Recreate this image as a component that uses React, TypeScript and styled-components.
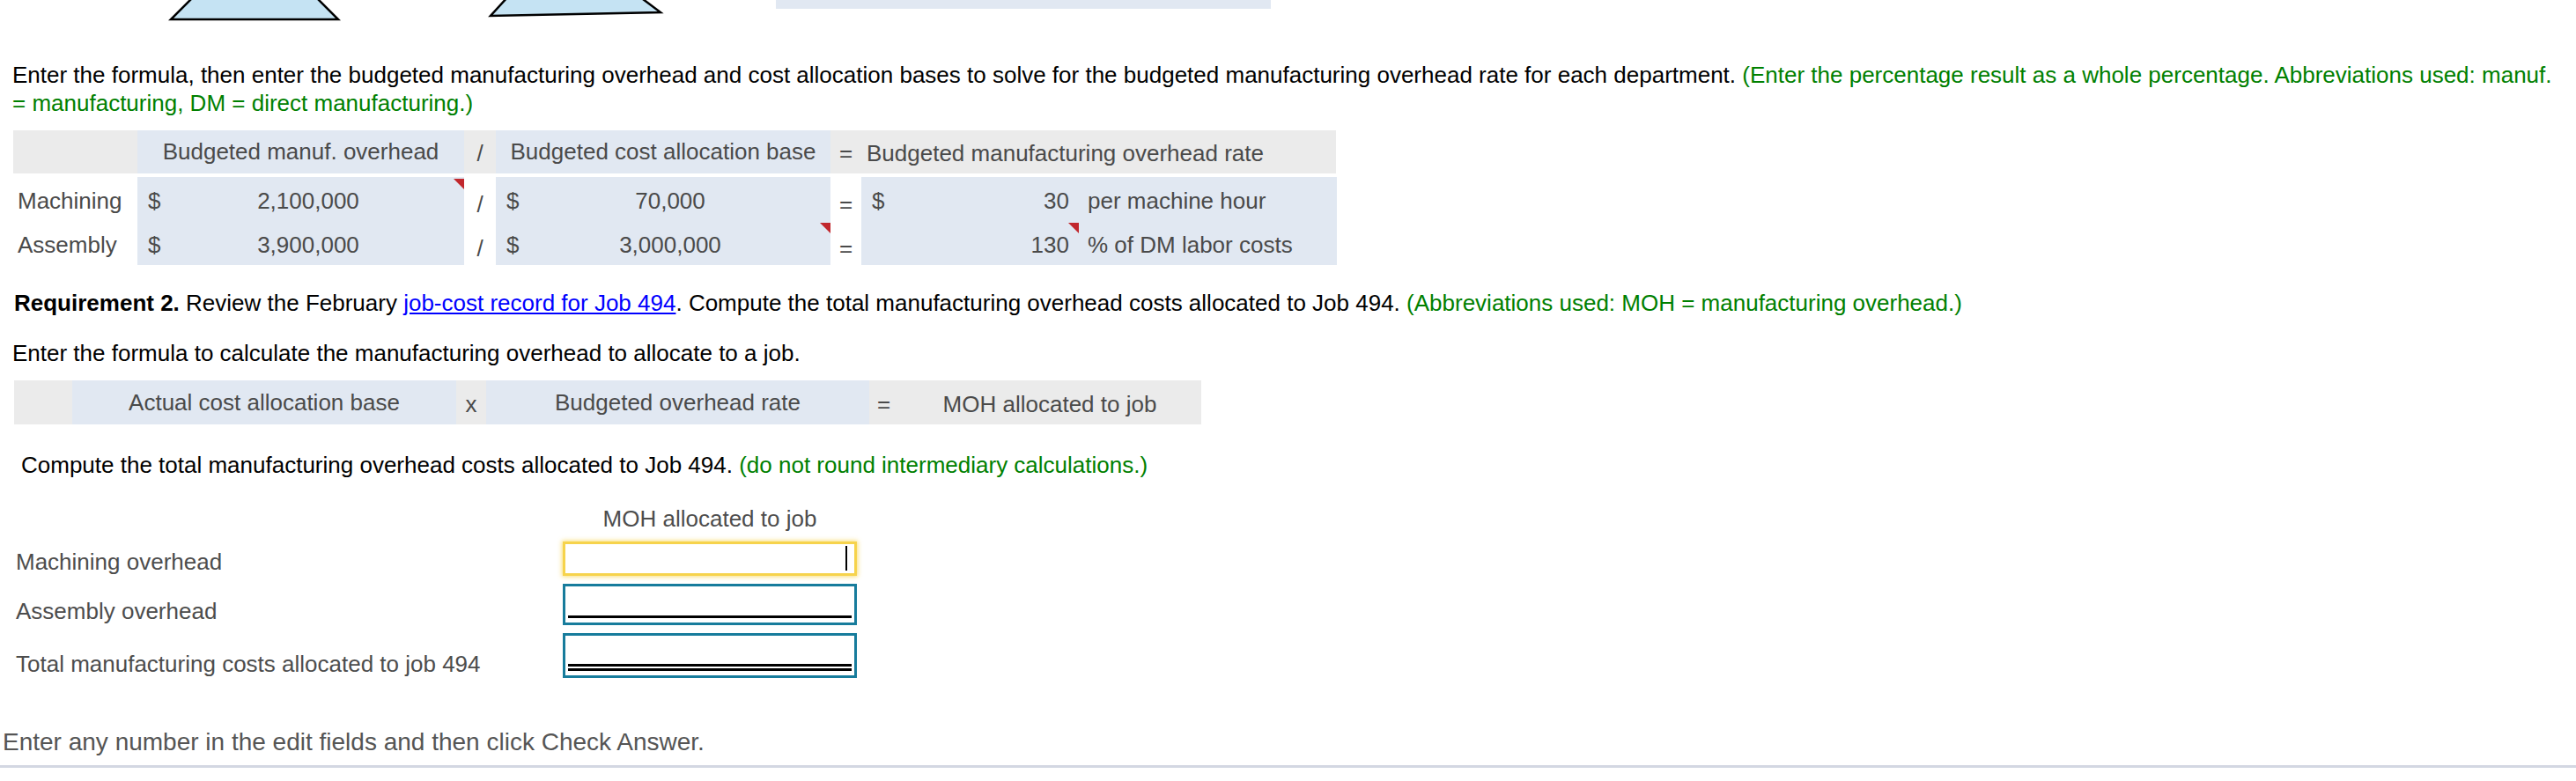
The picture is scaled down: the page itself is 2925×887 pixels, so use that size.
import React from 'react'
import styled, { createGlobalStyle } from 'styled-components'

const GlobalStyle = createGlobalStyle`
  html, body {
    margin: 0;
    padding: 0;
    background: #fff;
  }
  body {
    font-family: "Liberation Sans", Arial, sans-serif;
    font-size: 26px;
    color: #000;
    overflow: hidden;
  }
`

const Page = styled.div`
  width: 2925px;
  height: 887px;
  display: flex;
  flex-direction: column;
`

const TopStrip = styled.div`
  height: 30px;
  display: flex;
  align-items: flex-start;
`

const FadedPanel = styled.div`
  margin-left: 121px;
  width: 562px;
  height: 10px;
  background: #e1e8f2;
`

const Para = styled.p<{ $top: number; $left?: number; $muted?: boolean }>`
  margin: ${(p) => p.$top}px 16px 0 ${(p) => p.$left ?? 14}px;
  line-height: 32px;
  color: ${(p) => (p.$muted ? '#555' : '#000')};
`

const Hint = styled.span`
  color: #008000;
`

const Link = styled.a`
  color: #0000ff;
  text-decoration: underline;
  cursor: pointer;
`

/* ---------- formula table 1 ---------- */

const cols1 = '141px 371px 36px 380px 35px 540px'

const Formula = styled.div<{ $top: number; $left: number }>`
  margin: ${(p) => p.$top}px 0 0 ${(p) => p.$left}px;
  display: flex;
  flex-direction: column;
  gap: 4px;
  color: #4a4a4a;
`

const HeaderRow = styled.div<{ $cols: string; $h: number; $w: number }>`
  display: grid;
  grid-template-columns: ${(p) => p.$cols};
  height: ${(p) => p.$h}px;
  width: ${(p) => p.$w}px;
  background: #ebebeb;
`

const HeaderCell = styled.div<{ $blue?: boolean; $align?: string; $drop?: number; $lh: number }>`
  background: ${(p) => (p.$blue ? '#e1e8f2' : 'transparent')};
  text-align: ${(p) => p.$align ?? 'center'};
  padding: ${(p) => p.$drop ?? 0}px 0 0 ${(p) => (p.$align === 'left' ? 6 : 0)}px;
  line-height: ${(p) => p.$lh}px;
  white-space: nowrap;
`

const DataGrid = styled.div`
  display: grid;
  grid-template-columns: ${cols1};
  height: 100px;
`

const Column = styled.div<{ $blue?: boolean; $pad?: number }>`
  display: flex;
  flex-direction: column;
  background: ${(p) => (p.$blue ? '#e1e8f2' : 'transparent')};
  padding-left: ${(p) => p.$pad ?? 0}px;
`

const DataRow = styled.div<{ $center?: boolean }>`
  height: 50px;
  padding-top: 2px;
  box-sizing: border-box;
  display: flex;
  justify-content: ${(p) => (p.$center ? 'center' : 'flex-start')};
  white-space: nowrap;
`

const RowText = styled.span<{ $drop?: number }>`
  line-height: 44px;
  padding-top: ${(p) => 3 + (p.$drop ?? 0)}px;
`

const Dollar = styled.span`
  width: 15px;
  line-height: 44px;
  padding-top: 3px;
`

const Amount = styled.span<{ $align?: string; $width?: number; $right: number; $flag?: boolean }>`
  position: relative;
  ${(p) => (p.$width ? `width: ${p.$width}px;` : 'flex: 1;')}
  box-sizing: border-box;
  text-align: ${(p) => p.$align ?? 'center'};
  padding: 3px ${(p) => p.$right}px 0 0;
  line-height: 44px;
  height: 47px;

  &::after {
    content: '';
    display: ${(p) => (p.$flag ? 'block' : 'none')};
    position: absolute;
    top: 0;
    right: 0;
    width: 0;
    height: 0;
    border-top: 12px solid #c1272d;
    border-left: 12px solid transparent;
  }
`

const Unit = styled.span`
  margin-left: 10px;
  line-height: 44px;
  padding-top: 3px;
`

/* ---------- answer grid ---------- */

const Answer = styled.div`
  margin-top: 29px;
  display: grid;
  grid-template-columns: 639px 334px;
  row-gap: 9px;
  align-items: end;
  color: #4d4d4d;
`

const AnswerHead = styled.div`
  grid-column: 2;
  text-align: center;
  line-height: 32px;
  margin-bottom: 1px;
  white-space: nowrap;
`

const Label = styled.div`
  padding-left: 18px;
  line-height: 32px;
  white-space: nowrap;
`

const Field = styled.div<{ $h: number; $focus?: boolean }>`
  height: ${(p) => p.$h}px;
  box-sizing: border-box;
  border: 3px solid ${(p) => (p.$focus ? '#f6d34c' : '#177c9c')};
  box-shadow: ${(p) => (p.$focus ? '0 0 5px 1px rgba(246, 211, 76, 0.75)' : 'none')};
  background: #fff;
  padding: 0 3px ${(p) => (p.$focus ? 0 : 5)}px 3px;
  display: flex;
  flex-direction: column;
  justify-content: flex-end;
`

const Caret = styled.span`
  align-self: flex-end;
  width: 2px;
  height: 28px;
  margin: 0 5px 3px 0;
  background: #000;
`

const Rule = styled.div<{ $double?: boolean }>`
  height: ${(p) => (p.$double ? 2 : 0)}px;
  border-top: 3px solid #000;
  border-bottom: ${(p) => (p.$double ? '3px solid #000' : 'none')};
`

const Footer = styled.div`
  margin: 57px 0 0 3px;
  font-size: 28px;
  line-height: 32px;
  color: #555;
`

const BottomLine = styled.div`
  margin-top: 10px;
  height: 3px;
  background: #d3d7e2;
`

function TopSketch() {
  return (
    <svg width="760" height="30" viewBox="0 0 760 30">
      <polygon points="220,-4 358,-4 384,22 194,22" fill="#c5e3f3" stroke="#000" strokeWidth="2.5" />
      <polygon points="577,-4 726,-4 750,14 557,18" fill="#c5e3f3" stroke="#000" strokeWidth="2.5" />
    </svg>
  )
}

export default function App() {
  return (
    <>
      <GlobalStyle />
      <Page>
        <TopStrip>
          <TopSketch />
          <FadedPanel />
        </TopStrip>

        <Para $top={39}>
          Enter the formula, then enter the budgeted manufacturing overhead and cost allocation bases to solve for the
          budgeted manufacturing overhead rate for each department.{' '}
          <Hint>
            (Enter the percentage result as a whole percentage. Abbreviations used: manuf. = manufacturing, DM = direct
            manufacturing.)
          </Hint>
        </Para>

        <Formula $top={15} $left={15}>
          <HeaderRow $cols={cols1} $h={49} $w={1502}>
            <HeaderCell $lh={49} />
            <HeaderCell $blue $lh={49}>Budgeted manuf. overhead</HeaderCell>
            <HeaderCell $lh={45} $drop={4}>/</HeaderCell>
            <HeaderCell $blue $lh={49}>Budgeted cost allocation base</HeaderCell>
            <HeaderCell $lh={45} $drop={4}>=</HeaderCell>
            <HeaderCell $lh={45} $drop={4} $align="left">Budgeted manufacturing overhead rate</HeaderCell>
          </HeaderRow>

          <DataGrid>
            <Column $pad={5}>
              <DataRow><RowText>Machining</RowText></DataRow>
              <DataRow><RowText>Assembly</RowText></DataRow>
            </Column>
            <Column $blue $pad={12}>
              <DataRow>
                <Dollar>$</Dollar>
                <Amount $right={10} $flag>2,100,000</Amount>
              </DataRow>
              <DataRow>
                <Dollar>$</Dollar>
                <Amount $right={10}>3,900,000</Amount>
              </DataRow>
            </Column>
            <Column>
              <DataRow $center><RowText $drop={4}>/</RowText></DataRow>
              <DataRow $center><RowText $drop={4}>/</RowText></DataRow>
            </Column>
            <Column $blue $pad={12}>
              <DataRow>
                <Dollar>$</Dollar>
                <Amount $right={11}>70,000</Amount>
              </DataRow>
              <DataRow>
                <Dollar>$</Dollar>
                <Amount $right={11} $flag>3,000,000</Amount>
              </DataRow>
            </Column>
            <Column>
              <DataRow $center><RowText $drop={4}>=</RowText></DataRow>
              <DataRow $center><RowText $drop={4}>=</RowText></DataRow>
            </Column>
            <Column $blue $pad={12}>
              <DataRow>
                <Dollar>$</Dollar>
                <Amount $align="right" $width={220} $right={11}>30</Amount>
                <Unit>per machine hour</Unit>
              </DataRow>
              <DataRow>
                <Dollar />
                <Amount $align="right" $width={220} $right={11} $flag>130</Amount>
                <Unit>% of DM labor costs</Unit>
              </DataRow>
            </Column>
          </DataGrid>
        </Formula>

        <Para $top={27} $left={16}>
          <b>Requirement 2.</b> Review the February <Link>job-cost record for Job 494</Link>. Compute the total
          manufacturing overhead costs allocated to Job 494.{' '}
          <Hint>(Abbreviations used: MOH = manufacturing overhead.)</Hint>
        </Para>

        <Para $top={25}>Enter the formula to calculate the manufacturing overhead to allocate to a job.</Para>

        <Formula $top={15} $left={16}>
          <HeaderRow $cols="66px 436px 34px 435px 33px 344px" $h={50} $w={1348}>
            <HeaderCell $lh={50} />
            <HeaderCell $blue $lh={49} $drop={1}>Actual cost allocation base</HeaderCell>
            <HeaderCell $lh={45} $drop={5}>x</HeaderCell>
            <HeaderCell $blue $lh={49} $drop={1}>Budgeted overhead rate</HeaderCell>
            <HeaderCell $lh={45} $drop={5}>=</HeaderCell>
            <HeaderCell $lh={45} $drop={5}>MOH allocated to job</HeaderCell>
          </HeaderRow>
        </Formula>

        <Para $top={30} $left={24}>
          Compute the total manufacturing overhead costs allocated to Job 494.{' '}
          <Hint>(do not round intermediary calculations.)</Hint>
        </Para>

        <Answer>
          <AnswerHead>MOH allocated to job</AnswerHead>
          <Label>Machining overhead</Label>
          <Field $h={39} $focus>
            <Caret />
          </Field>
          <Label>Assembly overhead</Label>
          <Field $h={47}>
            <Rule />
          </Field>
          <Label>Total manufacturing costs allocated to job 494</Label>
          <Field $h={51}>
            <Rule $double />
          </Field>
        </Answer>

        <Footer>Enter any number in the edit fields and then click Check Answer.</Footer>
        <BottomLine />
      </Page>
    </>
  )
}
